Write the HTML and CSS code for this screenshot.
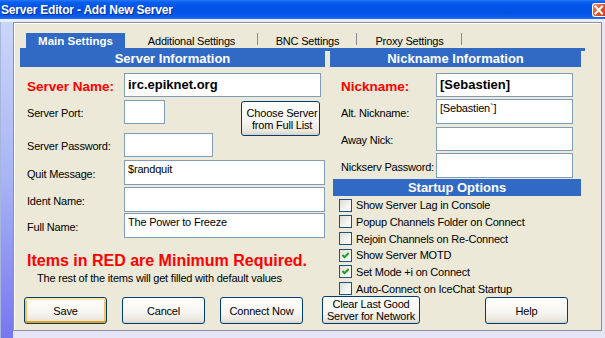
FILE: index.html
```html
<!DOCTYPE html>
<html>
<head>
<meta charset="utf-8">
<title>Server Editor - Add New Server</title>
<link rel="stylesheet" href="styles.css">
</head>
<body>
<div class="screen">
  <div class="titlebar">
    <span class="title">Server Editor - Add New Server</span>
    <span class="close"><svg width="13" height="14" viewBox="0 0 13 14"><path d="M3.5 3.5 L10 10.5 M10 3.5 L3.5 10.5" stroke="#fff" stroke-width="2" stroke-linecap="square"/></svg></span>
  </div>
  <div class="desk">
    <div class="stripe"></div>
    <div class="dialog">
      <div class="tabs">
        <div class="tabstrip">
          <span class="tab active">Main Settings</span>
          <span class="tab sep w-add">Additional Settings</span>
          <span class="tab sep w-bnc">BNC Settings</span>
          <span class="tab sep w-proxy">Proxy Settings</span>
        </div>
        <div class="page">
          <div class="col left">
            <div class="hdr">Server Information</div>
            <div class="row r-name">
              <span class="lbl req">Server Name:</span>
              <div class="field strong w-name">irc.epiknet.org</div>
            </div>
            <div class="group">
              <div class="subcol">
                <div class="row">
                  <span class="lbl">Server Port:</span>
                  <div class="field w-port"></div>
                </div>
                <div class="row r-pass">
                  <span class="lbl">Server Password:</span>
                  <div class="field w-pass"></div>
                </div>
              </div>
              <button class="btn choose">Choose Server<br>from Full List</button>
            </div>
            <div class="row r-quit">
              <span class="lbl">Quit Message:</span>
              <div class="field tall w-wide">$randquit</div>
            </div>
            <div class="row r-ident">
              <span class="lbl">Ident Name:</span>
              <div class="field tall w-wide"></div>
            </div>
            <div class="row r-full">
              <span class="lbl">Full Name:</span>
              <div class="field tall w-wide">The Power to Freeze</div>
            </div>
            <div class="note">Items in RED are Minimum Required.</div>
            <div class="subnote">The rest of the items will get filled with default values</div>
          </div>
          <div class="col right">
            <div class="hdr">Nickname Information</div>
            <div class="row r-name">
              <span class="lbl req">Nickname:</span>
              <div class="field strong w-nick">[Sebastien]</div>
            </div>
            <div class="row r-alt">
              <span class="lbl">Alt. Nickname:</span>
              <div class="field tall w-nick">[Sebastien`]</div>
            </div>
            <div class="row r-away">
              <span class="lbl">Away Nick:</span>
              <div class="field w-nick"></div>
            </div>
            <div class="row r-ns">
              <span class="lbl">Nickserv Password:</span>
              <div class="field tall w-nick"></div>
            </div>
            <div class="hdr startup">Startup Options</div>
            <div class="checks">
              <div class="chk"><span class="box"></span>Show Server Lag in Console</div>
              <div class="chk"><span class="box"></span>Popup Channels Folder on Connect</div>
              <div class="chk"><span class="box"></span>Rejoin Channels on Re-Connect</div>
              <div class="chk"><span class="box on"><svg width="11" height="11" viewBox="0 0 11 11"><path d="M2.5 5 L4.5 7.2 L8.7 3" fill="none" stroke="#21A121" stroke-width="2"/></svg></span>Show Server MOTD</div>
              <div class="chk"><span class="box on"><svg width="11" height="11" viewBox="0 0 11 11"><path d="M2.5 5 L4.5 7.2 L8.7 3" fill="none" stroke="#21A121" stroke-width="2"/></svg></span>Set Mode +i on Connect</div>
              <div class="chk"><span class="box"></span>Auto-Connect on IceChat Startup</div>
            </div>
          </div>
        </div>
      </div>
      <div class="buttons">
        <button class="btn b-save default">Save</button>
        <button class="btn b-cancel">Cancel</button>
        <button class="btn b-connect">Connect Now</button>
        <button class="btn b-clear">Clear Last Good<br>Server for Network</button>
        <button class="btn b-help">Help</button>
      </div>
    </div>
  </div>
</div>
</body>
</html>
```
FILE: styles.css
```css
* { box-sizing: border-box; }
html, body { margin: 0; padding: 0; }
body {
  width: 605px;
  height: 338px;
  overflow: hidden;
  font-family: "Liberation Sans", Arial, sans-serif;
  font-size: 11px;
  letter-spacing: -0.2px;
  color: #000;
  background: #E6E4F7;
}
.screen { display: flex; flex-direction: column; height: 338px; }

.titlebar {
  height: 19px;
  display: flex;
  align-items: center;
  justify-content: space-between;
  background: linear-gradient(to bottom, #2C7AF5 0px, #0860F0 2px, #0055E8 6px, #0053E3 13px, #0A60EE 17px, #2A72F2 19px);
}
.title {
  color: #fff;
  font-weight: bold;
  font-size: 12px;
  letter-spacing: -0.2px;
  padding-left: 1px;
  text-shadow: 1px 1px 0 #0A2A9A;
}
.close {
  width: 13px;
  height: 14px;
  display: flex;
  border: 1px solid #fff;
  border-right: none;
  border-radius: 3px 0 0 3px;
  background: linear-gradient(135deg, #F08A6A 0%, #E25A30 45%, #C8401C 100%);
}
.close svg { margin: -1px 0 0 -1px; }

.desk {
  flex: 1;
  display: flex;
  border-top: 3px solid #ECEEF6;
}
.stripe {
  width: 13px;
  border-left: 1px solid #A8B4DC;
  background: linear-gradient(to bottom, #CAD6F8 0%, #A8B4F4 50%, #7676F0 100%);
}
.dialog {
  width: 589px;
  height: 309px;
  border: 1px solid #8E8EA4;
  background: #ECE9D8;
  box-shadow: inset 1px 1px 0 #fff;
  padding: 5px 0 0 6px;
  display: flex;
  flex-direction: column;
}

.tabs { width: 577px; }
.tabstrip {
  height: 20px;
  padding: 5px 0 0 6px;
  display: flex;
}
.tab {
  height: 15px;
  display: flex;
  align-items: center;
  justify-content: center;
  color: #000;
}
.tab.active {
  width: 99px;
  background: #316AC5;
  color: #fff;
  font-weight: bold;
  font-size: 11.5px;
  letter-spacing: 0;
}
.tab.sep {
  background: linear-gradient(#8A8A8A, #8A8A8A) right top / 1px 12px no-repeat;
}
.w-add { width: 133px; }
.w-bnc { width: 99px; }
.w-proxy { width: 105px; }

.page {
  width: 565px;
  height: 247px;
  border-top: 3px solid #316AC5;
  display: flex;
  gap: 5px;
}
.col { display: flex; flex-direction: column; }
.col.left { width: 305px; }
.col.right { width: 251px; }

.hdr {
  height: 16px;
  line-height: 16px;
  background: #316AC5;
  color: #fff;
  font-weight: bold;
  font-size: 13px;
  letter-spacing: 0;
  text-align: center;
}
.hdr.startup { margin: 1px 0 0 3px; height: 17px; line-height: 17px; }

.row { display: flex; align-items: center; }
.left .row { padding-left: 7px; }
.right .row { padding-left: 11px; }
.lbl { padding-top: 2px; white-space: nowrap; }
.left .lbl { width: 97px; }
.right .lbl { width: 95px; }
.lbl.req { color: #FF0000; font-weight: bold; font-size: 13.5px; letter-spacing: 0; }

.field {
  height: 24px;
  background: #fff;
  border: 1px solid #7F9DB9;
  padding: 2px 3px;
  white-space: nowrap;
}
.field.tall { height: 25px; }
.field.strong {
  display: flex;
  align-items: center;
  padding-top: 0;
  font-weight: bold;
  font-size: 13px;
  letter-spacing: 0;
}
.w-name { width: 197px; }
.w-port { width: 41px; }
.w-pass { width: 89px; }
.w-wide { width: 201px; }
.w-nick { width: 137px; }

.r-name { margin-top: 6px; }
.group { display: flex; margin-top: 3px; }
.subcol { display: flex; flex-direction: column; }
.r-pass { margin-top: 9px; }
.r-quit { margin-top: 3px; }
.r-ident { margin-top: 2px; }
.r-full { margin-top: 1px; }
.r-alt { margin-top: 2px; }
.r-away { margin-top: 3px; }
.r-away .field { height: 24px; }
.r-ns { margin-top: 2px; }

.btn {
  font-family: "Liberation Sans", Arial, sans-serif;
  font-size: 11px;
  letter-spacing: -0.2px;
  color: #000;
  border: 1px solid #003C74;
  border-radius: 3px;
  background: linear-gradient(to bottom, #FFFFFF 0%, #F5F4EF 60%, #E9E6DC 90%, #D6D0C5 100%);
  padding: 0;
  line-height: 12px;
  text-align: center;
}
.choose {
  width: 79px;
  height: 35px;
  margin: 1px 0 0 auto;
  margin-right: 5px;
  padding-left: 3px;
}

.note {
  color: #FF0000;
  font-weight: bold;
  font-size: 16px;
  letter-spacing: 0;
  line-height: 18px;
  margin-top: 14px;
  padding-left: 7px;
  white-space: nowrap;
}
.subnote {
  line-height: 13px;
  margin-top: 2px;
  padding-left: 17px;
  white-space: nowrap;
}

.checks { margin-top: 1px; display: flex; flex-direction: column; }
.chk {
  height: 16.67px;
  display: flex;
  align-items: center;
  padding-left: 9px;
  white-space: nowrap;
}
.box {
  width: 13px;
  height: 13px;
  margin-right: 4px;
  border: 1px solid #1C5180;
  background: linear-gradient(135deg, #DCDCD7 0%, #F4F4F0 60%, #FFFFFF 100%);
  display: flex;
}

.buttons {
  display: flex;
  margin-top: 2px;
  padding-left: 4px;
}
.buttons .btn { width: 83px; height: 27px; }
.b-cancel { margin-left: 15px; }
.b-connect { margin-left: 15px; }
.b-clear { margin-left: 19px; width: 98px !important; height: 28px !important; margin-top: -1px; }
.b-help { margin-left: 65px; }
.btn.default {
  box-shadow: inset 0 -2px 0 #E5A01A, inset 0 2px 0 #FFE7A2, inset 2px 0 0 #F9C45A, inset -2px 0 0 #F9C45A;
}
```
